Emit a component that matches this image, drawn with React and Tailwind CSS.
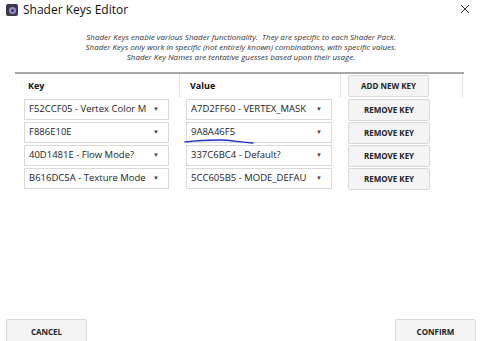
import React from "react";

const rows = [
  { key: "F52CCF05 - Vertex Color M", value: "A7D2FF60 - VERTEX_MASK" },
  { key: "F886E10E", value: "9A8A46F5" },
  { key: "40D1481E - Flow Mode?", value: "337C6BC4 - Default?" },
  { key: "B616DC5A - Texture Mode", value: "5CC605B5 - MODE_DEFAU" },
];

const Combo = ({ text, width }) => (
  <div
    className={`${width} h-[21px] border border-[#d9d9d9] bg-white flex items-center pl-[4px] pr-[9px] text-[9.5px] text-[#222]`}
  >
    <span className="flex-1 min-w-0 whitespace-nowrap">{text}</span>
    <span className="text-[6px] text-[#444] pl-[4px]">▼</span>
  </div>
);

const Btn = ({ children, className = "" }) => (
  <button
    className={`bg-[#f4f4f4] border border-[#d9d9d9] rounded-[2px] text-[8px] font-bold text-[#222] flex items-center justify-center ${className}`}
  >
    {children}
  </button>
);

export default function App() {
  return (
    <div
      className="relative w-[482px] h-[341px] bg-white overflow-hidden flex flex-col"
      style={{ fontFamily: '"Segoe UI", "Open Sans", "Noto Sans", sans-serif' }}
    >
      {/* title bar */}
      <div className="h-[20px] flex items-center pl-[6px] pr-[12px]">
        <div className="w-[12px] h-[12px] rounded-[2px] bg-[#3a3a48] flex items-center justify-center">
          <div className="w-[7px] h-[7px] rounded-full border-[2px] border-[#9c8ad8]" />
        </div>
        <span className="ml-[5px] text-[12px] text-[#111]">Shader Keys Editor</span>
        <svg className="ml-auto mt-[-2px]" width="10" height="10" viewBox="0 0 10 10">
          <path d="M1 1 L9 9 M9 1 L1 9" stroke="#333" strokeWidth="1" fill="none" />
        </svg>
      </div>

      {/* description */}
      <div className="mt-[12px] text-center italic text-[8px] leading-[10px] text-[#333]">
        <div>Shader Keys enable various Shader functionality.&nbsp; They are specific to each Shader Pack.</div>
        <div>Shader Keys only work in specific (not entirely known) combinations, with specific values.</div>
        <div>Shader Key Names are tentative guesses based upon their usage.</div>
      </div>

      {/* table */}
      <div className="mt-[10px] ml-[15px] w-[449px] border-t-[2px] border-[#a8a8a8]">
        <div className="flex h-[24px]">
          <div className="w-[165px] pl-[13px] flex items-center text-[9px] font-bold text-[#111] border-r border-[#e3e3e3]">
            Key
          </div>
          <div className="w-[161px] pl-[10px] flex items-center text-[9px] font-bold text-[#111] border-r border-[#e3e3e3]">
            Value
          </div>
          <div className="w-[122px] pl-[7px] flex items-center border-r border-[#e3e3e3]">
            <Btn className="w-[81px] h-[22px]">ADD NEW KEY</Btn>
          </div>
        </div>
        <div className="flex flex-col gap-[2px] mt-[1px]">
          {rows.map((r) => (
            <div key={r.key} className="flex h-[21px]">
              <div className="w-[165px] pl-[9px]">
                <Combo text={r.key} width="w-[145px]" />
              </div>
              <div className="w-[161px] pl-[6px]">
                <Combo text={r.value} width="w-[146px]" />
              </div>
              <div className="w-[122px] pl-[7px]">
                <Btn className="w-[82px] h-[22px]">REMOVE KEY</Btn>
              </div>
            </div>
          ))}
        </div>
      </div>

      <div className="flex-1" />

      {/* bottom buttons */}
      <div className="flex justify-between px-[6px] h-[22px]">
        <Btn className="w-[81px] h-[26px]">CANCEL</Btn>
        <Btn className="w-[81px] h-[26px]">CONFIRM</Btn>
      </div>

      {/* hand-drawn annotation */}
      <svg className="absolute left-[183px] top-[137px]" width="80" height="10" viewBox="0 0 80 10">
        <path
          d="M2 5 C 10 4, 25 3, 37 3 C 48 3, 55 5, 70 6"
          stroke="#1f2fc8"
          strokeWidth="1.4"
          fill="none"
          strokeLinecap="round"
        />
      </svg>
    </div>
  );
}
